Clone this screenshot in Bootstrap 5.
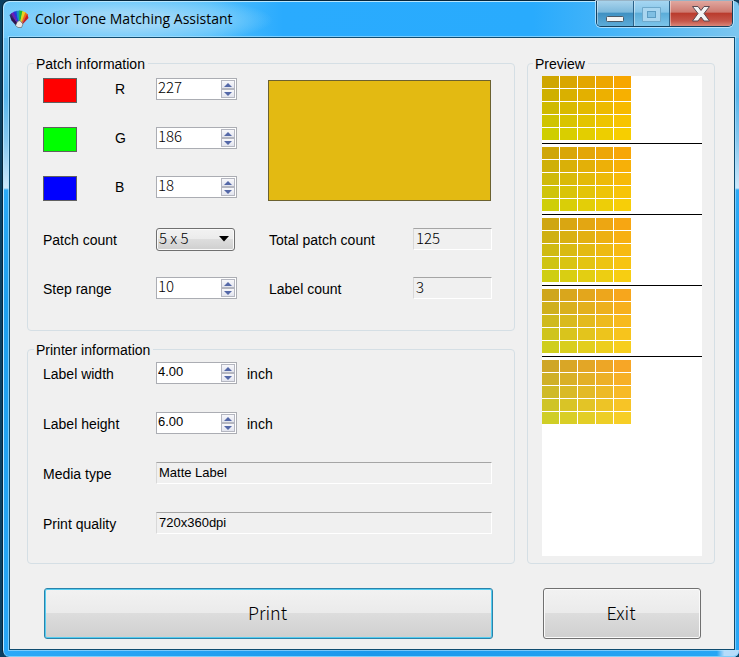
<!DOCTYPE html>
<html lang="en">
<head>
<meta charset="utf-8">
<meta name="viewport" content="width=device-width, initial-scale=1">
<title>Color Tone Matching Assistant</title>
<link href="https://cdn.jsdelivr.net/npm/bootstrap@5.3.0/dist/css/bootstrap.min.css" rel="stylesheet">
<style>
  body { background: #0b3f60; font: 14px/16px "Liberation Sans", Arial, sans-serif; color: #000; padding-left: 2px; }
  .window-frame {
    border: 1px solid #06263c; border-right: 0; border-bottom: 0; border-radius: 7px 6px 6px 7px;
    box-shadow: inset 1px 1px 0 #b9e6fd, inset 0 -1px 0 #7fcdf8;
    padding: 0 4px 7px 6px;
    background:
      radial-gradient(ellipse 150px 26px at 120px 19px, rgba(160,216,248,.95) 30%, rgba(130,208,251,.7) 70%, rgba(100,200,252,0) 100%) 0 0/100% 37px no-repeat,
      linear-gradient(90deg, #6cc8fa 0, #52bffc 28%, #2aabfe 38%, #29abfd 72%, #55b9f5 88%, #7cc6ef 100%) 0 0/100% 37px no-repeat,
      linear-gradient(90deg, #2ba9f8 0, #1a98ec 50%, #27a6f5 97%, #b5dcfa 98%, #b5dcfa 100%) 0 100%/100% 7px no-repeat,
      linear-gradient(180deg, #6dc3f3 0, #58b6ec 95px, #86c8f0 140px, #cde8fb 187px, #2baaf7 189px, #1da0ef 300px, #27a7f7 100%);
  }
  .title-bar { height: 36px; }
  .title-group { padding-top: 8px; }
  .title-text { font: 14px/20px "Open Sans", "Noto Sans", sans-serif; margin-left: 6px; }
  .caption-set { height: 26px; margin-right: 2px; border: 1px solid #14405e; border-top: 0; border-radius: 0 0 5px 5px; box-shadow: 0 0 0 1px rgba(215,240,255,.7); overflow: hidden; }
  .caption-btn { border: 0; border-right: 1px solid #2c6288; width: 37px; padding: 0; background: linear-gradient(#a8d3ec 0, #7db9dc 45%, #3f90c2 48%, #5cabd8 100%); box-shadow: inset 1px 0 0 rgba(255,255,255,.4); }
  .caption-btn.max-btn { width: 36px; background: linear-gradient(#a5d6f2 0, #86c5e8 45%, #5bacd8 48%, #7cc4ea 100%); }
  .caption-btn.close-btn { width: 62px; border-right: 0; background: linear-gradient(#e0a79f 0, #cd7a70 45%, #b93a2c 48%, #c5564a 80%, #d98678 100%); }
  .caption-btn svg { display: block; margin: auto; }
  .client-area { background: #f0f0f0; border: 1px solid #0f4c70; box-shadow: 0 0 0 1px rgba(180,228,253,.6); padding: 16px 19px 10px 17px; }
  .panels { gap: 12px; }
  .group-stack { gap: 9px; }
  .group-box { border: 1px solid #d5dfe5; border-radius: 4px; padding: 0 22px 0 15px; }
  .group-box > legend { float: none; width: auto; font-size: 14px; line-height: 16px; margin: 0 0 0 -9px; padding: 2px 3px 0 2px; }
  .patch-box { padding-bottom: 30px; }
  .printer-box { padding-bottom: 29px; }
  .preview-box { width: 188px; padding: 0 12px 7px 14px; }
  .color-rows { padding-top: 6px; gap: 31px; }
  .channel-list { gap: 24px; }
  .channel-row { height: 25px; width: 194px; }
  .channel-row label, .channel-row .spin-box { margin-bottom: 3px; }
  .channel-chip { width: 34px; height: 25px; border: 1px solid #606060; }
  .chip-r { background: #f00; } .chip-g { background: #0f0; } .chip-b { background: #00f; }
  .channel-name { width: 41px; margin-left: 38px; }
  .mixed-color { background: #e3ba12; border: 1px solid #6b6130; margin: 2px 1px 0 0; }
  .count-rows { display: grid; grid-template-columns: 113px 81px 32px 1fr 79px; grid-auto-rows: 24px; row-gap: 25px; align-items: center; margin-top: 26px; }
  .count-rows .second-label { grid-column: 4; }
  .count-rows label, .printer-rows label, .unit-text { padding-top: 2px; }
  .printer-rows { display: grid; grid-template-columns: 113px 81px 1fr; grid-auto-rows: 22px; row-gap: 28px; align-items: center; padding-top: 4px; }
  .printer-rows .wide-field { grid-column: 2 / 4; }
  .unit-text { margin-left: 10px; }
  .spin-box { width: 81px; height: 22px; border: 1px solid #abadb3; background: #fff; padding: 0 1px 0 0; }
  .spin-box input { border: 0; background: transparent; padding: 0 0 2px 1px; width: 64px; min-width: 0; }
  .spin-box input.thin-text { padding-bottom: 4px; }
  .thin-text { font-family: "Noto Sans CJK JP", "Liberation Sans", sans-serif; font-weight: 300; font-size: 15px; line-height: 16px; color: #000; }
  .plain-text { font-size: 13px; line-height: 16px; color: #000; }
  .spin-btns { width: 14px; flex: none; padding: 1px 0; }
  .spin-btns button { border: 1px solid #b4b6c0; background: linear-gradient(#f8f8fb, #e2e4ee); padding: 0; line-height: 0; height: 9px; }
  .spin-btns svg { display: block; margin: auto; }
  .read-field { height: 22px; border: 1px solid; border-color: #a5a5a5 #fff #fff #d8d8d8; background: #f0f0f0; padding: 0 0 1px 2px; min-width: 0; }
  .read-field.thin-text { padding-bottom: 3px; }
  .count-select { appearance: none; height: 23px; width: 79px; padding: 0 0 3px 2px; border: 1px solid #707070; border-radius: 3px; box-shadow: inset 0 0 0 1px #fafafa;
    background: url("data:image/svg+xml,%3Csvg xmlns='http://www.w3.org/2000/svg' width='10' height='6'%3E%3Cpath d='M0 0h10L5 5.5z'/%3E%3C/svg%3E") right 5px center no-repeat, linear-gradient(#f2f2f2 0, #ebebeb 48%, #dddddd 50%, #cfcfcf 100%); }
  .preview-sheet { background: #fff; margin-top: 4px; min-height: 480px; }
  .patch-block { display: grid; grid-template-columns: repeat(5, 17px); grid-auto-rows: 12px; gap: 1px; padding-bottom: 3px; }
  .patch-block + .patch-block { border-top: 1px solid #000; padding-top: 3px; }
  .action-bar { margin-top: 24px; padding: 0 14px 0 17px; gap: 50px; }
  .action-btn { height: 51px; padding: 0 2px 4px 0; border: 1px solid #707070; border-radius: 3px; box-shadow: inset 0 0 0 1px #fafafa; font-size: 18px; background: linear-gradient(#f2f2f2 0, #ebebeb 48%, #dddddd 49%, #cfcfcf 100%); }
  .print-btn { border-color: #2a83ab; box-shadow: inset 0 0 0 1px #55cdf0; }
  .exit-btn { width: 158px; }
</style>
</head>
<body class="min-vh-100 d-flex flex-column">
<div class="window-frame d-flex flex-column flex-grow-1">
  <header class="title-bar d-flex align-items-start justify-content-between">
    <div class="title-group d-flex align-items-center">
      <svg width="20" height="18" viewBox="0 0 20 18" aria-hidden="true">
        <path d="M9 15.500 .5 5 3 3z" fill="#3a2a6e"/>
        <path d="M9.500 16 2 3.500 5.500 1.500z" fill="#6b1fb4"/>
        <path d="M10 16 4.500 2 8 .8z" fill="#2337dc"/>
        <path d="M10 16 7.300 1 11 .5z" fill="#1792bf"/>
        <path d="M10 16 10.300.5 14 1z" fill="#20b834"/>
        <path d="M10.500 16 13.300 1 17 2.500z" fill="#e5d41f"/>
        <path d="M11 16 16.300 2.500 19 4.500z" fill="#ee6a18"/>
        <path d="M11.500 16.500 18.300 4 19.500 8z" fill="#c51d24"/>
        <path d="M.5 5 9.500 14 7 15.500 2.500 10.500z" fill="#2c1450"/>
        <path d="M8.500 11.500 11 10.500 12.500 12.500 14 14 12.500 17.500H9L6.500 15.500z" fill="#e9e9e9" stroke="#555" stroke-width=".6"/>
      </svg>
      <span class="title-text">Color Tone Matching Assistant</span>
    </div>
    <div class="caption-set d-flex">
      <button type="button" class="caption-btn" aria-label="Minimize">
        <svg width="20" height="20" viewBox="0 0 20 20"><rect x="1.500" y="12.500" width="17" height="5" rx="1" fill="#f4f4f4" stroke="#4b5a68"/></svg>
      </button>
      <button type="button" class="caption-btn max-btn" aria-label="Maximize">
        <svg width="20" height="20" viewBox="0 0 20 20"><path fill-rule="evenodd" d="M.5 3.500h18v14H.5zM5.500 7.500v6h8v-6z" fill="#a9d6f0" stroke="#6fa9cb"/><rect x="5.500" y="7.500" width="8" height="6" fill="#7fbfe3" stroke="#5b9cc3"/></svg>
      </button>
      <button type="button" class="caption-btn close-btn" aria-label="Close">
        <svg width="20" height="18" viewBox="0 0 20 18"><path d="M1.500 1.500h5.500l3 4 3-4h5.500l-5.500 7 5.500 7.500h-5.500l-3-4-3 4H1.500L7 8.500z" fill="#f3f3f3" stroke="#5a4a52" stroke-linejoin="round"/></svg>
      </button>
    </div>
  </header>

  <main class="client-area flex-grow-1">
    <div class="panels d-flex">
      <div class="group-stack d-flex flex-column flex-grow-1">
        <fieldset class="group-box patch-box">
          <legend>Patch information</legend>
          <div class="color-rows d-flex">
            <div class="channel-list d-flex flex-column">
              <div class="channel-row d-flex align-items-center">
                <span class="channel-chip chip-r"></span><label class="channel-name" for="red">R</label>
                <div class="spin-box d-flex"><input id="red" class="thin-text flex-grow-1" type="text" value="227"><div class="spin-btns d-flex flex-column"></div></div>
              </div>
              <div class="channel-row d-flex align-items-center">
                <span class="channel-chip chip-g"></span><label class="channel-name" for="green">G</label>
                <div class="spin-box d-flex"><input id="green" class="thin-text flex-grow-1" type="text" value="186"><div class="spin-btns d-flex flex-column"></div></div>
              </div>
              <div class="channel-row d-flex align-items-center">
                <span class="channel-chip chip-b"></span><label class="channel-name" for="blue">B</label>
                <div class="spin-box d-flex"><input id="blue" class="thin-text flex-grow-1" type="text" value="18"><div class="spin-btns d-flex flex-column"></div></div>
              </div>
            </div>
            <div class="mixed-color flex-grow-1"></div>
          </div>
          <div class="count-rows">
            <label for="patch-count">Patch count</label>
            <select id="patch-count" class="count-select thin-text"><option>5 x 5</option></select>
            <label class="second-label" for="total-count">Total patch count</label>
            <input id="total-count" class="read-field thin-text" type="text" value="125" readonly>
            <label for="step-range">Step range</label>
            <div class="spin-box d-flex"><input id="step-range" class="thin-text flex-grow-1" type="text" value="10"><div class="spin-btns d-flex flex-column"></div></div>
            <label class="second-label" for="label-count">Label count</label>
            <input id="label-count" class="read-field thin-text" type="text" value="3" readonly>
          </div>
        </fieldset>

        <fieldset class="group-box printer-box">
          <legend>Printer information</legend>
          <div class="printer-rows">
            <label for="label-width">Label width</label>
            <div class="spin-box d-flex"><input id="label-width" class="plain-text flex-grow-1" type="text" value="4.00"><div class="spin-btns d-flex flex-column"></div></div>
            <span class="unit-text">inch</span>
            <label for="label-height">Label height</label>
            <div class="spin-box d-flex"><input id="label-height" class="plain-text flex-grow-1" type="text" value="6.00"><div class="spin-btns d-flex flex-column"></div></div>
            <span class="unit-text">inch</span>
            <label for="media-type">Media type</label>
            <input id="media-type" class="read-field plain-text wide-field" type="text" value="Matte Label" readonly>
            <label for="print-quality">Print quality</label>
            <input id="print-quality" class="read-field plain-text wide-field" type="text" value="720x360dpi" readonly>
          </div>
        </fieldset>
      </div>

      <fieldset class="group-box preview-box flex-shrink-0">
        <legend>Preview</legend>
        <div class="preview-sheet" id="sheet"></div>
      </fieldset>
    </div>

    <div class="action-bar d-flex">
      <button type="button" class="action-btn print-btn thin-text flex-grow-1">Print</button>
      <button type="button" class="action-btn exit-btn thin-text">Exit</button>
    </div>
  </main>
</div>

<script src="https://cdn.jsdelivr.net/npm/bootstrap@5.3.0/dist/js/bootstrap.bundle.min.js"></script>
<script>
  // Up and down buttons for every spin box
  document.querySelectorAll('.spin-btns').forEach(function (box) {
    box.innerHTML =
      '<button type="button" tabindex="-1" aria-label="Increase"><svg width="8" height="4" viewBox="0 0 8 4"><path d="M4 0 8 4H0z" fill="#5468a8"/></svg></button>' +
      '<button type="button" tabindex="-1" aria-label="Decrease"><svg width="8" height="4" viewBox="0 0 8 4"><path d="M4 4 8 0H0z" fill="#5468a8"/></svg></button>';
  });

  // Red grows by column, green by row, blue by block, around the chosen colour
  var base = [227, 186, 18], step = 10, sheet = document.getElementById('sheet');
  for (var b = -2; b <= 2; b++) {
    var block = document.createElement('div');
    block.className = 'patch-block';
    for (var g = -2; g <= 2; g++) {
      for (var r = -2; r <= 2; r++) {
        var cell = document.createElement('span');
        cell.style.backgroundColor = 'rgb(' + (base[0] + r * step) + ',' + (base[1] + g * step) + ',' + Math.max(0, base[2] + b * step) + ')';
        block.appendChild(cell);
      }
    }
    sheet.appendChild(block);
  }
</script>
</body>
</html>
